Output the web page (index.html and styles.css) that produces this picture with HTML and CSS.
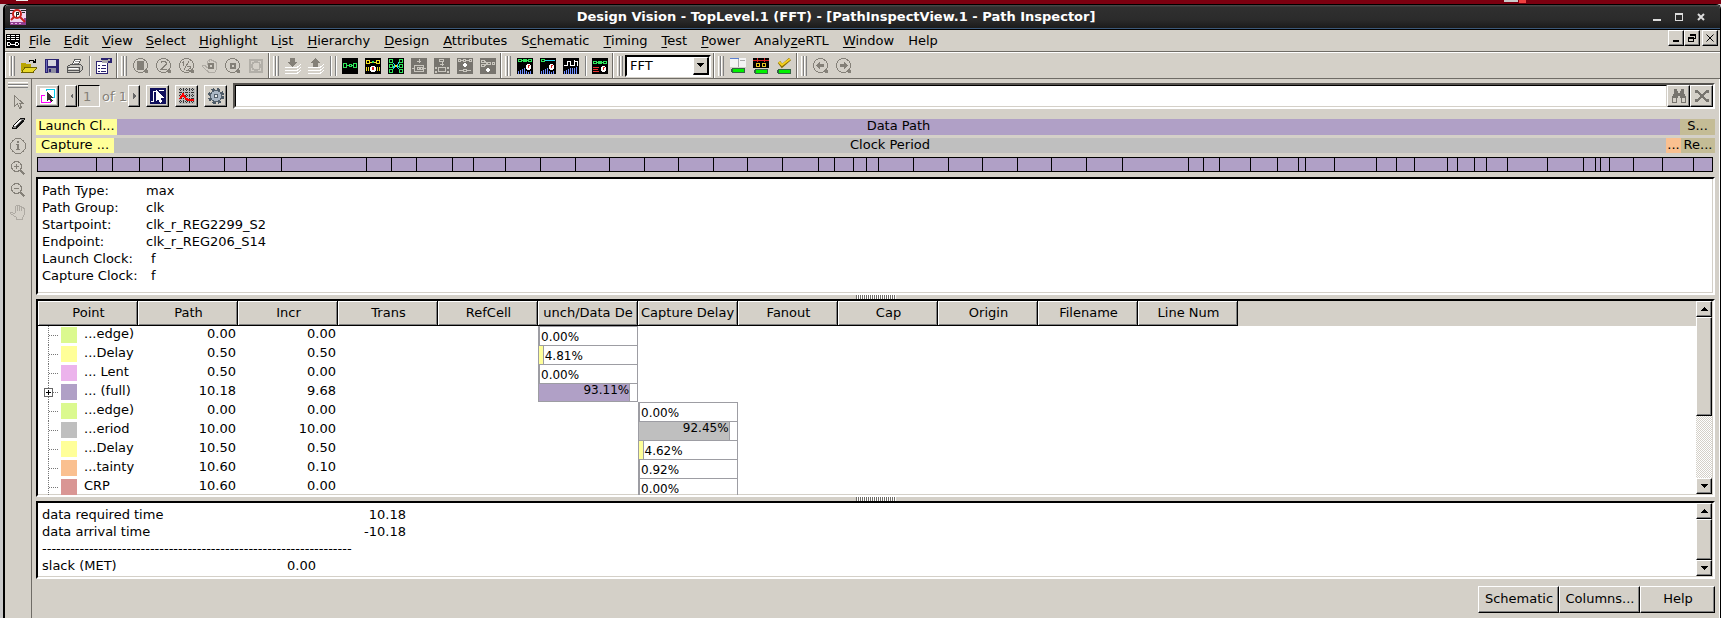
FILE: index.html
```html
<!DOCTYPE html>
<html lang="en">
<head>
<meta charset="utf-8">
<title>Design Vision - TopLevel.1 (FFT)</title>
<link rel="stylesheet" href="styles.css">
</head>
<body>
<div class="desktop"></div>
<div class="window">
  <header class="titlebar">
    <svg class="app-icon" viewBox="0 0 16 16"><path fill="#f0d4f0" d="M0 0h16v16H0z"/><path fill="#933f93" d="M0 13h16v3H0zM14 9h2v4h-2z"/><path fill="#e9b6e9" d="M1 14h2v1H1zM5 14h2v1H5zM9 14h2v1H9z"/><path fill="#222" d="M0 1h4v1H0zM0 4h3v1H0zM11 1h5v1h-5zM12 3h3v1h-3z"/><circle cx="7" cy="5" r="4" fill="#fff" stroke="#c8201c" stroke-width="2" shape-rendering="auto"/><path stroke="#c8201c" stroke-width="2" d="M10 8l5 5M4 8l-3 3" shape-rendering="auto"/><path fill="#222" d="M6 3h1v5H6zM7 3h2v1H7zM7 5h2v1H7zM8 4h1v1H8z"/></svg>
    <h1 class="title">Design Vision - TopLevel.1 (FFT) - [PathInspectView.1 - Path Inspector]</h1>
    <div class="win-controls">
      <button aria-label="Minimize"><svg viewBox="0 0 8 8"><path fill="#ddd" d="M0 6h8v2H0z"/></svg></button>
      <button aria-label="Maximize"><svg viewBox="0 0 8 8"><path fill="#ddd" fill-rule="evenodd" d="M0 0h8v8H0zM1 2h6v5H1z"/></svg></button>
      <button aria-label="Close"><svg viewBox="0 0 8 8"><path fill="none" stroke="#ddd" stroke-width="2" d="M1 1l6 6M7 1L1 7" shape-rendering="auto"/></svg></button>
    </div>
  </header>

  <nav class="menubar">
    <svg class="doc-icon" viewBox="0 0 14 14"><path d="M0 0h14v14H0z"/><path fill="#fff" d="M1 1h3v1H1zM5 1h4v1H5zM10 1h3v1h-3zM1 3h3v1H1zM5 3h4v1H5zM10 3h3v1h-3zM1 5h3v1H1zM5 5h4v1H5zM10 5h3v1h-3z"/><path fill="none" stroke="#fff" d="M1.500 8.500h2l1 1v1l-1 1h-2zM5 10.500h4M9.500 8.500h2l1 1v1l-1 1h-2z"/></svg>
    <button><u>F</u>ile</button><button><u>E</u>dit</button><button><u>V</u>iew</button><button><u>S</u>elect</button><button><u>H</u>ighlight</button><button>L<u>i</u>st</button><button><u>H</u>ierarchy</button><button><u>D</u>esign</button><button><u>A</u>ttributes</button><button>S<u>c</u>hematic</button><button><u>T</u>iming</button><button><u>T</u>est</button><button><u>P</u>ower</button><button>Analy<u>z</u>eRTL</button><button><u>W</u>indow</button><button>Help</button>
    <div class="mdi-controls">
      <button aria-label="Minimize view"><svg viewBox="0 0 10 10"><path d="M2 7h6v2H2z"/></svg></button>
      <button aria-label="Restore view"><svg viewBox="0 0 10 10"><path fill="none" stroke="#000" d="M3.500 3V1.500h5v4H7M3 2h6M1.500 4.500h5v4h-5zM1 5h6"/></svg></button>
      <button class="apart" aria-label="Close view"><svg viewBox="0 0 10 10"><path fill="none" stroke="#000" d="M1.500 1.500l7 7M8.500 1.500l-7 7" shape-rendering="auto"/></svg></button>
    </div>
  </nav>

  <div class="toolbar">
    <div class="group">
      <i class="grip"></i>
      <button aria-label="Open"><svg viewBox="0 0 16 16"><path fill="none" stroke="#000" d="M8 3.500l1-1h3l2 2M14.500 1v4M12 4.500h3"/><path fill="#b9a500" d="M0 5h4l1 1h5v3H4l-4 5z"/><path fill="#e8d82a" d="M4 9h12l-4 5H0z"/><path fill="none" stroke="#6e6200" d="M0 14.500h12l4-5H4l-3 4"/></svg></button>
      <button aria-label="Save"><svg viewBox="0 0 16 16"><path fill="#2b2370" d="M1 1h14v14H1z"/><path fill="#d7d7df" d="M4 2h8v6H4z"/><path fill="#8d8da0" d="M4 10h8v5H4z"/><path fill="#2b2370" d="M5 11h2v3H5z"/><path fill="#6a6ab8" d="M2 2h1v12H2z"/></svg></button>
      <button aria-label="Print"><svg viewBox="0 0 16 16"><path fill="#fff" stroke="#555" d="M5.500 6.500l2-5h6l-2 5z"/><path stroke="#999" d="M8 3.500h4M7 5.500h4"/><path fill="#c8c6c0" stroke="#555" d="M.5 8.500l3-2h10l2 2v3l-3 3h-12z"/><path stroke="#555" d="M1 9.500h11M1 12.500h11M12.500 9v5"/><path stroke="#fff" d="M2 10.500h9"/></svg></button>
      <i class="sep"></i>
      <button aria-label="Properties"><svg viewBox="0 0 16 16"><path fill="#fff" stroke="#2b2370" d="M.5 3.500h11v12H.5z"/><path fill="#2b2370" d="M5 0h6v2H5zM11 0h5v5h-5z"/><path fill="#aaa" d="M6 2h6v3H6zM12 1h2v2h-2z"/><path stroke="#2b2370" d="M2 7.500h2M6 7.500h4M2 10.500h2M5 10.500h5M2 13.500h2M5 13.500h5"/></svg></button>
    </div>
    <div class="group off">
      <i class="grip"></i>
      <button aria-label="Zoom fit" disabled><svg viewBox="0 0 16 16"><circle class="ln" cx="7.500" cy="7.500" r="7"/><path fill="#848078" d="M5 4h5v7H5zM12 12h3v3h-3z"/><path class="ln" d="M4.500 3.500h6v8h-6z"/></svg></button>
      <button aria-label="Zoom in 2x" disabled><svg viewBox="0 0 16 16"><circle class="ln" cx="7.500" cy="7.500" r="7"/><path class="ln" d="M5 5l1-1.500h3l1 1v2L5 11.500h5.500"/><path fill="#848078" d="M12 12h3v3h-3z"/></svg></button>
      <button aria-label="Zoom out 2x" disabled><svg viewBox="0 0 16 16"><circle class="ln" cx="7.500" cy="7.500" r="7"/><path class="ln" d="M3 4.500l1.500-1V8M10 3l-5 9M8 8.500h3v2l-3 2h3.500"/><path fill="#848078" d="M12 12h3v3h-3z"/></svg></button>
      <button aria-label="Pan to selection" disabled><svg viewBox="0 0 16 16"><path class="pale" d="M5.500 7V3.500l1-1 1 1v-2h2v1h2v1h2v1h1v7l-2 3H7L.5 8.500V7h2l3 3"/><path class="ln" stroke-width="2" d="M7 6h4v4H7z"/></svg></button>
      <button aria-label="Zoom to selection" disabled><svg viewBox="0 0 16 16"><circle class="ln" cx="7.500" cy="7.500" r="7"/><path class="ln" stroke-width="2" d="M6 6h4v4H6z"/><path fill="#848078" d="M12 12h3v3h-3z"/></svg></button>
      <button aria-label="Zoom full" disabled><svg viewBox="0 0 16 16"><path fill="#b2afa8" fill-rule="evenodd" d="M1 1h14v14H1zM3 3v3h1V4h2V3zM10 3v1h2v2h1V3zM3 10v3h3v-1H4v-2zM12 10v2h-2v1h3v-3zM6 5h4l1 1v4l-1 1H6l-1-1V6z"/></svg></button>
    </div>
    <div class="group off">
      <i class="grip"></i>
      <button aria-label="Push design" disabled><svg viewBox="0 0 16 16"><path fill="#848078" d="M5 0h5v4h3L7.500 9 2 4h3z"/><path fill="none" stroke="#fff" d="M0 9.500h12l4-3M0 12.500h12l4-3M0 15.500h12l4-3"/></svg></button>
      <button aria-label="Pop design" disabled><svg viewBox="0 0 16 16"><path fill="#848078" d="M5 9h5V5h3L7.500 0 2 5h3z"/><path fill="none" stroke="#fff" d="M0 9.500h12l4-3M0 12.500h12l4-3M0 15.500h12l4-3"/></svg></button>
      <i class="sep wide"></i>
      <button aria-label="Create schematic"><svg viewBox="0 0 16 16"><path d="M0 0h16v16H0z"/><path fill="none" stroke="#2fe35b" d="M1.500 5.500h3v4h-3zM11.500 5.500h3v4h-3zM7 6.500h2v2H7zM5 7.500h2M9 7.500h2"/></svg></button>
      <button aria-label="Path schematic"><svg viewBox="0 0 16 16"><path d="M0 0h16v16H0z"/><path fill="none" stroke="#f5e11e" d="M1.500 2.500h3v3h-3zM11.500 2.500h3v3h-3zM5 4.500h6"/><path fill="#2fe35b" d="M7 3h2v2H7z"/><circle cx="8" cy="11" r="3" fill="#fff"/><path fill="#d22" d="M7 9h2v3H7z"/><path stroke="#f5e11e" d="M1.500 9v4M3.500 9v4M12.500 9v4M14.500 9v4"/></svg></button>
      <button aria-label="Fanin schematic"><svg viewBox="0 0 16 16"><path d="M0 0h16v16H0z"/><path fill="none" stroke="#24d8e8" d="M4 3l3 5-3 5M12 3L9 8l3 5M4 8h8"/><path fill="#000" stroke="#2fe35b" d="M1.500 1.500h3v3h-3zM1.500 6.500h3v3h-3zM1.500 11.500h3v3h-3zM11.500 1.500h3v3h-3zM11.500 6.500h3v3h-3zM11.500 11.500h3v3h-3z"/><path fill="#f5e11e" d="M7 7h2v2H7z"/></svg></button>
      <button aria-label="Add paths" disabled><svg viewBox="0 0 16 16"><path fill="#77746e" d="M0 0h16v16H0z"/><path fill="none" stroke="#c9c6be" d="M8 1v4M6 3.500h4M3.500 7.500h9v6h-9zM6 9.500h2v2H6zM9 9.500h2v2H9zM1 10.500h2M13 10.500h2"/></svg></button>
      <button aria-label="Add fanin" disabled><svg viewBox="0 0 16 16"><path fill="#77746e" d="M0 0h16v16H0z"/><path fill="none" stroke="#c9c6be" d="M5.500 1.500h4v2h-4zM8 4v4M6 6.500h4M4.500 9.500h7v4h-7zM1.500 9.500h1v1h-1zM1.500 13.500h1v1h-1zM13.500 9.500h1v1h-1zM13.500 13.500h1v1h-1z"/></svg></button>
      <button aria-label="Add nets" disabled><svg viewBox="0 0 16 16"><path fill="#77746e" d="M0 0h16v16H0z"/><path fill="none" stroke="#c9c6be" d="M1.500 1.500h2v2h-2zM6.500 1.500h2v2h-2zM12.500 1.500h2v2h-2zM4 2.500h2M9 2.500h3M2 12.500h4M10 12.500h4M6.500 11.500h3v2h-3z"/><path fill="#fff" d="M7 5h2v4H7zM6 6h4v2H6z"/></svg></button>
      <button aria-label="Add fanout" disabled><svg viewBox="0 0 16 16"><path fill="#77746e" d="M0 0h16v16H0z"/><path fill="none" stroke="#c9c6be" d="M1.500 2.500h3v2h-3zM1.500 6.500h3v2h-3zM7.500 4.500h3v2h-3zM12.500 4.500h2v2h-2zM5 3.500l2 2M5 7.500l2-2"/><path fill="#fff" d="M7 10h2v4H7zM6 11h4v2H6z"/></svg></button>
    </div>
    <div class="group">
      <i class="grip"></i>
      <button aria-label="Endpoint slack"><svg viewBox="0 0 16 16"><path d="M0 0h16v16H0z"/><path fill="none" stroke="#2fe35b" d="M1.500 1.500h3v2h-3zM6.500 1.500h3v2h-3zM11.500 1.500h3v2h-3zM4 2.500h8"/><path stroke="#6f8cff" d="M1.500 13v3M3.500 12v4M5.500 11v5M7.500 10v6M9.500 13v3M11.500 14v2M13.500 13v3"/><circle cx="11.500" cy="9" r="3" fill="#fff"/><path fill="#d22" d="M11 7h1v3h-1zM12 7h1v1h-1z"/></svg></button>
      <button aria-label="Net slack"><svg viewBox="0 0 16 16"><path d="M0 0h16v16H0z"/><path fill="none" stroke="#2fe35b" d="M1.500 1.500h3v2h-3z"/><path stroke="#24d8e8" d="M5 2.500h10"/><path stroke="#6f8cff" d="M1.500 13v3M3.500 12v4M5.500 11v5M7.500 10v6M9.500 13v3M11.500 14v2M13.500 13v3"/><circle cx="11.500" cy="9" r="3" fill="#fff"/><path fill="#d22" d="M11 7h1v3h-1zM12 7h1v1h-1z"/></svg></button>
      <button aria-label="Path histogram"><svg viewBox="0 0 16 16"><path d="M0 0h16v16H0z"/><path fill="none" stroke="#fff" d="M1 7.500h3.500v-5M4.500 3.500h3v4h3.500v-6M11 3.500h3.500V8"/><path stroke="#6f8cff" d="M1.500 13v3M3.500 12v4M5.500 11v5M7.500 10v6M9.500 10v6M11.500 10v6M13.500 9v7"/></svg></button>
      <i class="sep"></i>
      <button aria-label="Timing report"><svg viewBox="0 0 16 16"><path d="M0 0h16v16H0z"/><path fill="none" stroke="#2fe35b" d="M1.500 3.500h3v2h-3zM6.500 3.500h3v2h-3zM11.500 3.500h3v2h-3zM4 4.500h8"/><path stroke="#e33" d="M1 9.500h6M1 11.500h5M1 13.500h6"/><circle cx="11.500" cy="11" r="3" fill="#fff"/><path fill="#d22" d="M11 9h1v3h-1zM12 9h1v1h-1z"/></svg></button>
    </div>
    <div class="group">
      <i class="grip"></i>
      <div class="combo"><select aria-label="Current design"><option>FFT</option></select><span class="drop"><svg viewBox="0 0 7 4"><path d="M0 0h7v1H6v1H5v1H4v1H3V3H2V2H1V1H0z"/></svg></span></div>
    </div>
    <div class="group">
      <i class="grip"></i>
      <button aria-label="Design list"><svg viewBox="0 0 16 16"><path fill="#f4f4f4" d="M0 0h16v9H0z"/><path fill="#5b7fd0" d="M0 0h9v1H0z"/><path stroke="#aaa" d="M8.500 1v8M10 2.500h5"/><path fill="#00f000" stroke="#364" d="M2.500 10.500h12v4h-12z"/><path fill="#364" d="M1 11h1v3H1z"/></svg></button>
      <button aria-label="Cell schematic"><svg viewBox="0 0 16 16"><path d="M0 0h16v10H0z"/><path fill="none" stroke="#d22" d="M0 2.500h16M4.500 0v4M11.500 0v4"/><path fill="none" stroke="#e8c520" d="M3.500 5.500h3v3h-3zM9.500 5.500h3v3h-3z"/><path fill="#00f000" stroke="#364" d="M2.500 11.500h12v4h-12z"/><path fill="#364" d="M1 12h1v3H1z"/></svg></button>
      <button aria-label="Check design"><svg viewBox="0 0 16 16"><path fill="none" stroke="#8a6d00" stroke-width="3" d="M3 4l3 4 8-7" shape-rendering="auto"/><path fill="none" stroke="#f5d020" stroke-width="2" d="M3 4l3 3 8-6" shape-rendering="auto"/><path fill="#00f000" stroke="#364" d="M2.500 11.500h12v4h-12z"/><path fill="#364" d="M1 12h1v3H1z"/></svg></button>
    </div>
    <div class="group last off">
      <i class="grip"></i>
      <button aria-label="Back" disabled><svg viewBox="0 0 16 16"><circle class="ln" cx="7.500" cy="7.500" r="7"/><path fill="#848078" d="M3 7.500L7 4v2h4v3H7v2zM12 12h3v3h-3z"/></svg></button>
      <button aria-label="Forward" disabled><svg viewBox="0 0 16 16"><circle class="ln" cx="7.500" cy="7.500" r="7"/><path fill="#848078" d="M12 7.500L8 4v2H4v3h4v2zM12 12h3v3h-3z"/></svg></button>
    </div>
  </div>

  <div class="workspace">
    <aside class="tools">
      <i class="grip-h"></i>
      <button aria-label="Select" disabled><svg viewBox="0 0 16 16"><path class="ln" d="M4.500 1.500v11l3-3 2 5 2-1-2-4.500h3z"/></svg></button>
      <button aria-label="Highlight"><svg viewBox="0 0 16 16" shape-rendering="auto"><path fill="#888" stroke="#111" d="M2.500 12.500l1-3 7-7h4l-1 3-7 7z"/><path stroke="#111" stroke-width="2" d="M6 12l7-7"/><path stroke="#fff" d="M4.500 10l6-6"/></svg></button>
      <button aria-label="Information" disabled><svg viewBox="0 0 16 16" shape-rendering="auto"><circle class="ln" cx="8" cy="8" r="7.500"/><path fill="#848078" d="M7 3h2v2H7zM6 6h3v5h1v1H6v-1h1V7H6z"/></svg></button>
      <button aria-label="Zoom in" disabled><svg viewBox="0 0 16 16" shape-rendering="auto"><circle class="ln" cx="6.500" cy="6.500" r="5"/><path class="ln" d="M4 6.500h5M6.500 4v5"/><path class="ln" stroke-width="2" d="M10.500 10.500l4 4"/></svg></button>
      <button aria-label="Zoom out" disabled><svg viewBox="0 0 16 16" shape-rendering="auto"><circle class="ln" cx="6.500" cy="6.500" r="5"/><path class="ln" d="M4 6.500h5"/><path class="ln" stroke-width="2" d="M10.500 10.500l4 4"/></svg></button>
      <button aria-label="Pan" disabled><svg viewBox="0 0 16 16"><path class="pale" d="M5.500 9V2.500l1-1 1 1V7M7.500 3V1.500h2V7M9.500 2.500h2V7M11.500 3.500h2v1h1v6l-2 3v2h-6v-2L.5 9.500v-1h2l3 2"/></svg></button>
    </aside>

    <main class="inspector">
      <div class="path-bar">
        <button class="raised tool" aria-label="Select path"><svg viewBox="0 0 16 16"><path fill="#fff" d="M0 0h16v16H0z"/><path fill="none" stroke="#0ce" d="M6.500 3V1.500h8v8H12"/><path fill="none" stroke="#f0f" d="M5 7.500H1.500v7h9V13"/><path fill="#333" d="M7 4v9l2-2 2 3 2-1-2-3h3z"/></svg></button>
        <div class="pager">
          <button class="raised step" aria-label="Previous path" disabled><svg viewBox="0 0 5 6"><path fill="#666" d="M4 0v6L1 3z"/></svg></button>
          <input class="page" aria-label="Path number" value="1" disabled>
          <span class="of">of 1</span>
          <button class="raised step" aria-label="Next path" disabled><svg viewBox="0 0 5 6"><path fill="#666" d="M1 0v6l3-3z"/></svg></button>
        </div>
        <button class="raised tool" aria-label="Path profile"><svg viewBox="0 0 16 16"><path fill="#10105c" d="M0 0h16v16H0z"/><path fill="none" stroke="#fff" d="M1 13.500h2.500v-10H7M9 2.500h5"/><path fill="#fff" d="M6 2v11l2-2 2 4 2-1-1-4h3z"/></svg></button>
        <button class="raised tool" aria-label="Waveform"><svg viewBox="0 0 16 16"><path fill="#bbb" d="M0 0h16v16H0z"/><path stroke="#333" d="M0 1.500h16M0 4.500h16M0 7.500h16M0 10.500h16M0 13.500h16M1.500 0v16M4.500 0v16M7.500 0v16M10.500 0v16M13.500 0v16" stroke-dasharray="1 1"/><path fill="none" stroke="#f00" stroke-width="2" d="M1 11l3-5 3 5 3 1h5"/></svg></button>
        <button class="raised tool" aria-label="Settings"><svg viewBox="0 0 16 16" shape-rendering="auto"><circle cx="8" cy="8" r="6.500" fill="none" stroke="#4d5a66" stroke-width="3" stroke-dasharray="3 2.100"/><circle cx="8" cy="8" r="5.500" fill="#a9b6c4" stroke="#53606c"/><circle cx="8" cy="8" r="2" fill="#eee" stroke="#53606c"/></svg></button>
        <div class="search">
          <input aria-label="Find in path">
          <button class="raised tool" aria-label="Find" disabled><svg viewBox="0 0 14 14"><path fill="#77746e" fill-rule="evenodd" d="M3 1h2v2h1v1h2V3h1V1h2v3l2 4v5H9V9H8V7H6v2H5v4H1V8l2-4zM2 9v3h2V9zM10 9v3h2V9z"/></svg></button>
          <button class="raised tool" aria-label="Clear" disabled><svg viewBox="0 0 14 14" shape-rendering="auto"><path fill="none" stroke="#77746e" stroke-width="2" d="M1 3h2l4 4-4 4H1M13 3h-2L7 7l4 4h2"/></svg></button>
        </div>
      </div>

      <div class="budget">
        <span class="yellow launch">Launch Cl...</span><span class="purple fill">Data Path</span><span class="olive setup">S...</span>
      </div>
      <div class="budget second">
        <span class="yellow capture">Capture ...</span><span class="grey fill">Clock Period</span><span class="orange">...</span><span class="olive required">Re...</span>
      </div>
      <div class="cells" id="cells"></div>

      <section class="sunken info">
        <dl>
          <dt>Path Type:</dt><dd>max</dd>
          <dt>Path Group:</dt><dd>clk</dd>
          <dt>Startpoint:</dt><dd>clk_r_REG2299_S2</dd>
          <dt>Endpoint:</dt><dd>clk_r_REG206_S14</dd>
          <dt>Launch Clock:</dt><dd class="clock">f</dd>
          <dt>Capture Clock:</dt><dd class="clock">f</dd>
        </dl>
      </section>
      <div class="splitter"><i></i></div>

      <section class="sunken points">
        <div class="view">
          <table>
            <colgroup><col span="12" class="c"><col></colgroup>
            <thead><tr><th>Point</th><th>Path</th><th>Incr</th><th>Trans</th><th>RefCell</th><th><span>unch/Data De</span></th><th class="left"><span>Capture Delay</span></th><th>Fanout</th><th>Cap</th><th>Origin</th><th>Filename</th><th>Line Num</th><td class="rest"></td></tr></thead>
            <tbody>
              <tr><td><div class="point"><i class="twig"></i><i class="swatch green"></i>...edge)</div></td><td>0.00</td><td>0.00</td><td></td><td></td><td><div class="meter"><i></i><span>0.00%</span></div></td><td></td></tr>
              <tr><td><div class="point"><i class="twig"></i><i class="swatch yellow"></i>...Delay</div></td><td>0.50</td><td>0.50</td><td></td><td></td><td><div class="meter"><i class="yellow" style="width:4.81%"></i><span>4.81%</span></div></td><td></td></tr>
              <tr><td><div class="point"><i class="twig"></i><i class="swatch pink"></i>... Lent</div></td><td>0.50</td><td>0.00</td><td></td><td></td><td><div class="meter"><i></i><span>0.00%</span></div></td><td></td></tr>
              <tr><td><div class="point"><i class="twig"></i><button class="expand" aria-label="Expand"></button><i class="swatch purple"></i>... (full)</div></td><td>10.18</td><td>9.68</td><td></td><td></td><td><div class="meter end"><i class="purple" style="width:93.11%">93.11%</i></div></td><td></td></tr>
              <tr><td><div class="point"><i class="twig"></i><i class="swatch green"></i>...edge)</div></td><td>0.00</td><td>0.00</td><td></td><td></td><td></td><td><div class="meter"><i></i><span>0.00%</span></div></td></tr>
              <tr><td><div class="point"><i class="twig"></i><i class="swatch grey"></i>...eriod</div></td><td>10.00</td><td>10.00</td><td></td><td></td><td></td><td><div class="meter"><i class="grey" style="width:92.45%">92.45%</i></div></td></tr>
              <tr><td><div class="point"><i class="twig"></i><i class="swatch yellow"></i>...Delay</div></td><td>10.50</td><td>0.50</td><td></td><td></td><td></td><td><div class="meter"><i class="yellow" style="width:4.62%"></i><span>4.62%</span></div></td></tr>
              <tr><td><div class="point"><i class="twig"></i><i class="swatch orange"></i>...tainty</div></td><td>10.60</td><td>0.10</td><td></td><td></td><td></td><td><div class="meter"><i class="orange" style="width:0.92%"></i><span>0.92%</span></div></td></tr>
              <tr><td><div class="point"><i class="twig"></i><i class="swatch red"></i>CRP</div></td><td>10.60</td><td>0.00</td><td></td><td></td><td></td><td><div class="meter"><i></i><span>0.00%</span></div></td></tr>
            </tbody>
          </table>
        </div>
        <div class="scroll">
          <button class="raised" aria-label="Scroll up"><svg viewBox="0 0 7 4"><path d="M0 4h7V3H6V2H5V1H4V0H3v1H2v1H1v1H0z"/></svg></button>
          <i class="raised thumb points-thumb"></i><i class="track"></i>
          <button class="raised" aria-label="Scroll down"><svg viewBox="0 0 7 4"><path d="M0 0h7v1H6v1H5v1H4v1H3V3H2V2H1V1H0z"/></svg></button>
        </div>
      </section>
      <div class="splitter"><i></i></div>

      <section class="sunken slack">
        <div class="view report">
          <p><span class="name">data required time</span><span class="num">10.18</span></p>
          <p><span class="name">data arrival time</span><span class="num">-10.18</span></p>
          <p>------------------------------------------------------------------</p>
          <p><span class="name">slack (MET)</span><span>0.00</span></p>
        </div>
        <div class="scroll">
          <button class="raised" aria-label="Scroll up"><svg viewBox="0 0 7 4"><path d="M0 4h7V3H6V2H5V1H4V0H3v1H2v1H1v1H0z"/></svg></button>
          <i class="raised thumb slack-thumb"></i><i class="track"></i>
          <button class="raised" aria-label="Scroll down"><svg viewBox="0 0 7 4"><path d="M0 0h7v1H6v1H5v1H4v1H3V3H2V2H1V1H0z"/></svg></button>
        </div>
      </section>

      <footer class="actions"><button class="raised">Schematic</button><button class="raised">Columns...</button><button class="raised help">Help</button></footer>
    </main>
  </div>
</div>
<script src="cells.js"></script>
</body>
</html>
```

FILE: styles.css
```css
* { box-sizing: border-box; }
html { height: 100%; overflow: hidden; }
body {
  margin: 0;
  height: 100%;
  display: flex;
  flex-direction: column;
  overflow: hidden;
  background: #c9c9c9;
  color: #000;
  font: 13px/17px "DejaVu Sans", Verdana, sans-serif;
}
button, input, select { font: inherit; color: inherit; margin: 0; padding: 0; border: 0; border-radius: 0; background: none; }
svg { display: block; width: 16px; height: 16px; shape-rendering: crispEdges; flex: none; }
i { font-style: normal; }
p, dl, dd { margin: 0; }

.yellow { background: #ffff99; }
.purple { background: #b0a0c6; }
.grey { background: #bfbfbf; }
.olive { background: #c4bc96; }
.orange { background: #fac090; }
.green { background: #dbf98f; }
.pink { background: #ecb3ec; }
.red { background: #d99694; }

.desktop {
  flex: none;
  height: 4px;
  background:
    linear-gradient(#eee, #eee) 16px 0 / 12px 1px no-repeat,
    linear-gradient(#f04040, #f04040) calc(100% - 195px) 0 / 7px 3px no-repeat,
    linear-gradient(#ccc, #ccc) calc(100% - 203px) 0 / 14px 2px no-repeat,
    #7b0010;
}
.window {
  flex: 1;
  min-height: 0;
  display: flex;
  flex-direction: column;
  margin-left: 3px;
  border: solid #000;
  border-width: 1px 1px 0 2px;
  border-radius: 5px 5px 0 0;
  background: #d4d0c8;
}
.titlebar {
  flex: none;
  height: 25px;
  display: flex;
  align-items: center;
  padding: 0 8px 0 5px;
  border-bottom: 1px solid #000;
  border-radius: 4px 4px 0 0;
  background: linear-gradient(#4a4a4a, #303030 10%, #2b2b2b 60%, #191919);
  box-shadow: inset 0 -1px #3b5878;
}
.title { flex: 1; margin: 0; padding-bottom: 2px; text-align: center; color: #fff; font-size: 13px; font-weight: bold; white-space: nowrap; }
.win-controls { display: flex; }
.win-controls button { width: 22px; padding: 0 7px; }
.win-controls svg { width: 8px; height: 8px; }

.menubar {
  flex: none;
  height: 22px;
  display: flex;
  align-items: center;
  padding: 0 2px 0 1px;
  border-bottom: 1px solid #6f6c66;
}
.menubar > button { height: 20px; padding: 0 6px 1px; white-space: nowrap; margin-right: 1px; }
.menubar > button:nth-of-type(n+6) { margin-right: 2px; }
.menubar u { text-decoration-thickness: 1px; text-underline-offset: 2px; }
.doc-icon { width: 14px; height: 14px; margin-right: 3px; }
.mdi-controls { display: flex; align-self: flex-start; margin-left: auto; }
.mdi-controls button {
  width: 16px;
  height: 16px;
  display: flex;
  justify-content: center;
  align-items: center;
  border: solid;
  border-width: 1px;
  border-color: #fff #000 #000 #fff;
  box-shadow: inset -1px -1px #808080;
}
.mdi-controls svg { width: 10px; height: 10px; }
.mdi-controls .apart { margin-left: 2px; }

.toolbar { flex: none; height: 27px; display: flex; border-top: 1px solid #fff; border-bottom: 1px solid #6f6c66; }
.group { display: flex; align-items: center; padding: 0 1px 0 3px; border-left: 1px solid #fff; border-right: 1px solid #6f6c66; }
.group.last { border-right: 0; }
.group button { width: 23px; display: flex; justify-content: center; }
.grip, .grip-h { flex: none; }
.grip {
  width: 6px;
  height: 20px;
  margin-right: 2px;
  background: linear-gradient(90deg, #fff 1px, transparent 1px 2px, #808080 2px 3px, #fff 3px 4px, transparent 4px 5px, #808080 5px);
}
.sep { width: 6px; height: 20px; background: linear-gradient(90deg, transparent 3px, #808080 3px 4px, #fff 4px 5px, transparent 5px); }
.sep.wide { width: 11px; background: linear-gradient(90deg, transparent 3px, #808080 3px 4px, #fff 4px 5px, transparent 5px 8px, #808080 8px 9px, #fff 9px 10px, transparent 10px); }
.ln { fill: none; stroke: #848078; }
.pale { fill: none; stroke: #aeaaa3; }
.combo {
  position: relative;
  width: 86px;
  height: 22px;
  margin-right: 1px;
  border: 2px solid;
  border-color: #000 #fff #fff #000;
  background: #fff;
}
.combo select { width: 100%; height: 100%; padding: 0 0 2px 3px; appearance: none; }
.drop {
  position: absolute;
  right: 0;
  top: 0;
  bottom: 0;
  width: 16px;
  display: flex;
  justify-content: center;
  align-items: center;
  border: solid;
  border-width: 1px 2px 2px 1px;
  border-color: #fff #000 #000 #fff;
  background: #d4d0c8;
  pointer-events: none;
}
.drop svg, .scroll svg { width: 7px; height: 4px; }

.workspace { flex: 1; min-height: 0; display: flex; }
.tools {
  flex: none;
  width: 27px;
  display: flex;
  flex-direction: column;
  align-items: center;
  padding-top: 3px;
  border-right: 1px solid #6f6c66;
}
.grip-h {
  width: 20px;
  height: 6px;
  margin-bottom: 3px;
  background: linear-gradient(#fff 1px, transparent 1px 2px, #808080 2px 3px, #fff 3px 4px, transparent 4px 5px, #808080 5px);
}
.tools button { height: 22px; }

.inspector {
  flex: 1;
  min-width: 0;
  display: flex;
  flex-direction: column;
  padding: 4px 4px 5px;
  border-right: 1px solid #fff;
}
.inspector > * { flex: none; }
.raised {
  border: 1px solid;
  border-color: #fff #000 #000 #fff;
  background: #d4d0c8;
  box-shadow: inset -1px -1px #808080;
}
.path-bar { display: flex; align-items: center; gap: 6px; height: 26px; }
.tool { flex: none; width: 23px; height: 22px; display: flex; justify-content: center; align-items: center; }
.pager { display: flex; align-items: center; color: #848078; }
.step { width: 12px; height: 22px; display: flex; justify-content: center; align-items: center; }
.step svg { width: 5px; height: 6px; }
.page {
  width: 22px;
  height: 22px;
  margin-left: 1px;
  padding-left: 4px;
  border: 1px solid;
  border-color: #000 #fff #fff #000;
}
.of { width: 28px; padding-left: 2px; text-shadow: 1px 1px #fff; white-space: nowrap; }
.search {
  flex: 1;
  min-width: 0;
  height: 26px;
  display: flex;
  border: 2px solid;
  border-color: #55524e #fff #fff #55524e;
}
.search input { flex: 1; min-width: 0; border: 1px solid; border-color: #000 #d4d0c8 #d4d0c8 #000; background: #fff; }

.budget { display: flex; height: 16px; margin-top: 10px; }
.budget.second { height: 15px; margin-top: 3px; }
.budget span { line-height: 14px; text-align: center; white-space: nowrap; overflow: hidden; }
.fill { flex: 1; }
.launch { width: 81px; }
.setup { width: 35px; }
.capture { width: 78px; }
.budget .orange { width: 15px; }
.required { width: 34px; }
.cells { display: flex; gap: 1px; height: 15px; margin: 4px 2px 5px 1px; padding: 1px; background: #000; }

.sunken {
  border: solid;
  border-width: 2px;
  border-color: #000 #fff #fff #000;
  background: #fff;
  box-shadow: inset -1px -1px #d4d0c8;
}
.info { height: 118px; padding: 3px 4px; }
.info dl { display: grid; grid-template-columns: 104px 1fr; }
.info .clock { padding-left: 5px; }
.splitter { height: 4px; display: flex; justify-content: center; }
.splitter i { width: 40px; height: 4px; background: repeating-linear-gradient(90deg, #6f6c66 0 1px, #fff 1px 2px); }

.inspector > .points { flex: 1 1 0; min-height: 0; display: flex; }
.view { flex: 1; min-width: 0; overflow: hidden; }
table { width: 100%; table-layout: fixed; border-collapse: separate; border-spacing: 0; }
.c { width: 100px; }
th {
  height: 25px;
  padding: 0 0 2px 2px;
  overflow: hidden;
  font-weight: normal;
  white-space: nowrap;
  border: solid #000;
  border-width: 0 1px 1px 0;
  background: #d4d0c8;
  box-shadow: inset 1px 1px #fff, inset -1px -1px #808080;
}
th span { display: block; margin: 0 2px 0 1px; overflow: hidden; }
th.left { text-align: left; }
.rest { background: #d4d0c8; }
tbody td { height: 19px; padding: 0 2px 3px 0; text-align: right; white-space: nowrap; line-height: 16px; }
tbody td:first-child, tbody td:nth-child(6), tbody td:nth-child(7) { padding: 0; }
.point { position: relative; display: flex; height: 19px; padding-left: 23px; }
.twig { position: absolute; left: 10px; top: 0; width: 10px; height: 19px; border-left: 1px dotted #777; }
.twig::after { content: ""; position: absolute; left: 0; right: 0; top: 9px; border-top: 1px dotted #777; }
.swatch { width: 16px; height: 16px; margin: 1px 7px 0 0; }
.expand {
  position: absolute;
  left: 6px;
  top: 5px;
  width: 9px;
  height: 9px;
  border: 1px solid #666;
  background:
    linear-gradient(#000, #000) 1px 3px / 5px 1px no-repeat,
    linear-gradient(#000, #000) 3px 1px / 1px 5px no-repeat,
    #fff;
}
.meter {
  height: 19px;
  display: flex;
  border: solid #9d9da3;
  border-width: 1px 1px 0 1px;
  font-size: 12px;
  text-align: right;
}
.meter.end { border-bottom-width: 1px; }
.meter i { border-right: 1px solid #9d9da3; line-height: 13px; }
.meter span { line-height: 20px; padding-left: 1px; }

.scroll { flex: none; width: 17px; display: flex; flex-direction: column; padding-right: 1px; padding-bottom: 1px; background: #d4d0c8; }
.scroll button { flex: none; height: 16px; display: flex; justify-content: center; align-items: center; }
.thumb { display: block; }
.points-thumb { height: 99px; }
.slack-thumb { height: 42px; }
.track { flex: 1; background: repeating-conic-gradient(#fff 0 25%, #d4d0c8 0 50%) 0 0 / 2px 2px; }

.slack { height: 78px; display: flex; }
.report { padding: 3px 4px; }
.report p { display: flex; }
.report .name { width: 245px; }
.report .num { width: 119px; text-align: right; }
.actions { display: flex; justify-content: flex-end; padding-top: 7px; }
.actions button { height: 27px; min-width: 81px; padding: 0 4px 2px 5px; }
.actions .help { min-width: 75px; }
```

FILE: cells.js
```js
// Delay of each cell along the data path, drawn as proportional segments.
const delays = [
  58, 15, 26, 22, 26, 34, 21, 34, 84, 24, 24, 35, 20, 31, 34, 34, 33, 34, 33, 34,
  33, 34, 35, 15, 18, 12, 11, 34, 34, 33, 34, 33, 34, 35, 65, 14, 15, 30, 26, 20,
  6, 28, 41, 19, 17, 32, 9, 16, 11, 20, 39, 35, 11, 4, 8, 23, 28, 30, 18
];
const strip = document.getElementById("cells");
for (const delay of delays) {
  const cell = document.createElement("i");
  cell.className = "purple";
  cell.style.flex = `${delay} 0 0`;
  strip.append(cell);
}
```
